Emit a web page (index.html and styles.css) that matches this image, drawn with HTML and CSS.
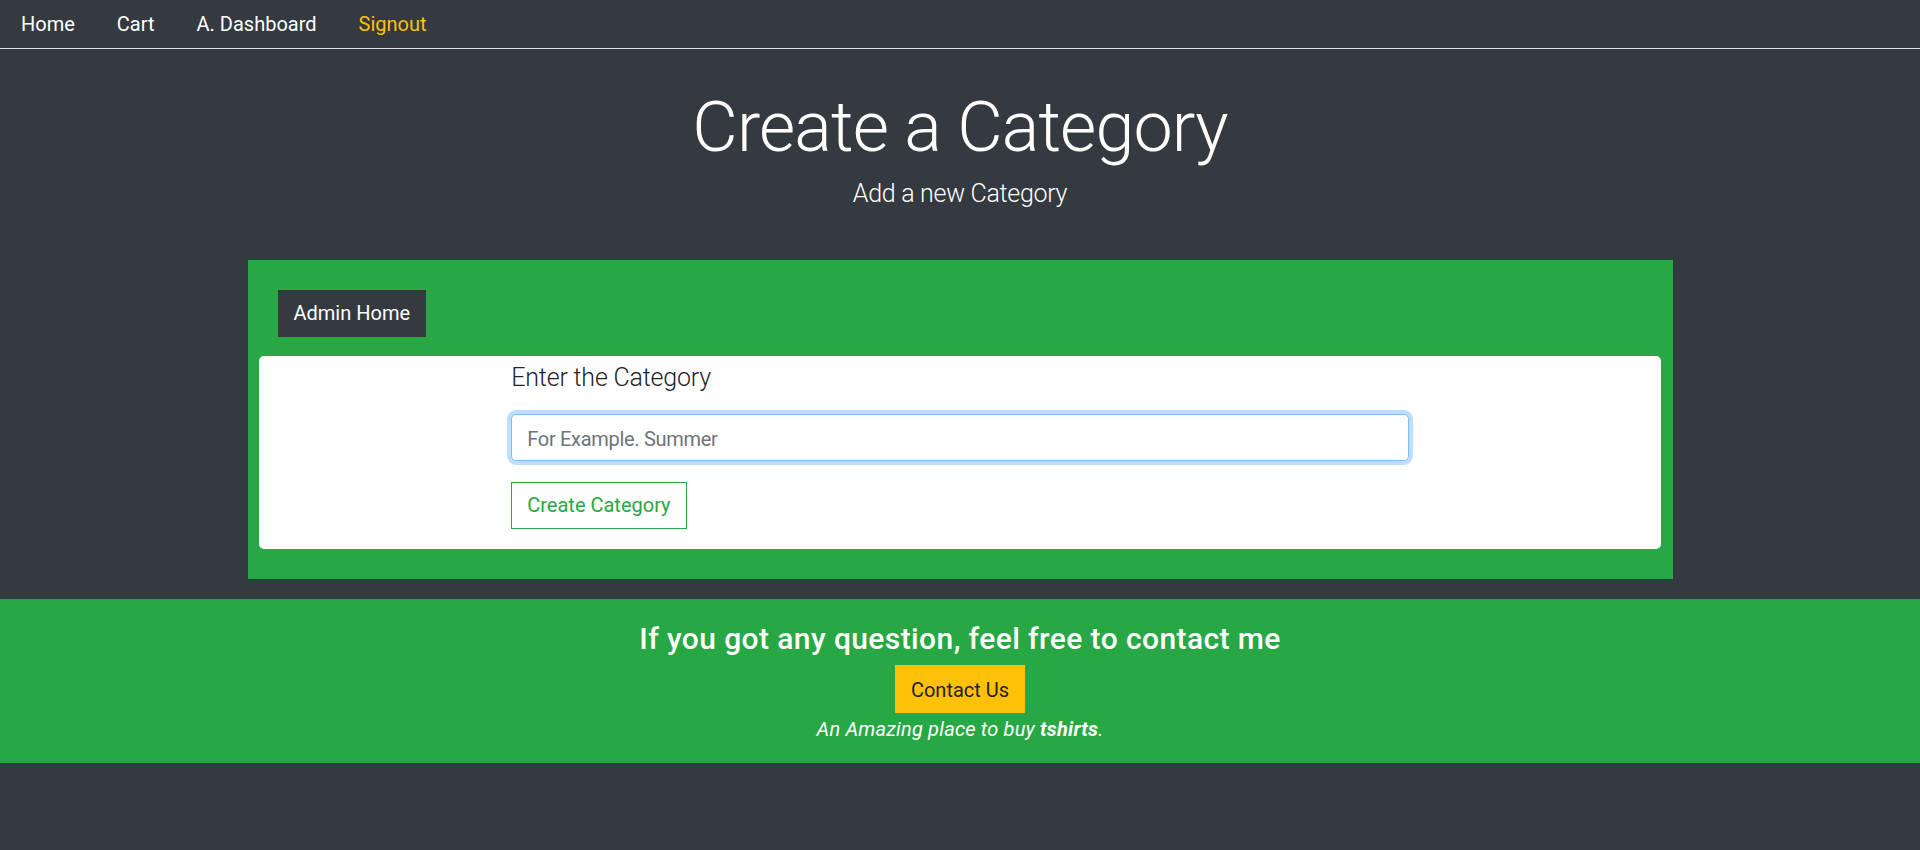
FILE: index.html
```html
<!DOCTYPE html>
<html lang="en">
<head>
<meta charset="utf-8">
<title>Create a Category</title>
<link rel="stylesheet" href="styles.css">
</head>
<body>
<ul class="nav">
  <li><a class="nav-link" href="#">Home</a></li>
  <li><a class="nav-link" href="#">Cart</a></li>
  <li><a class="nav-link" href="#">A. Dashboard</a></li>
  <li><a class="nav-link nav-warning" href="#">Signout</a></li>
</ul>

<header class="jumbotron">
  <h1 class="display-title">Create a Category</h1>
  <p class="lead-sub">Add a new Category</p>
</header>

<main class="container">
  <div class="admin-bar">
    <a class="btn btn-dark" href="#">Admin Home</a>
  </div>
  <div class="card">
    <form class="form-col">
      <p class="lead-label">Enter the Category</p>
      <div class="form-group">
        <input class="form-control" type="text" placeholder="For Example. Summer">
      </div>
      <button class="btn btn-outline-success" type="button">Create Category</button>
    </form>
  </div>
</main>

<footer class="footer">
  <h4 class="footer-title">If you got any question, feel free to contact me</h4>
  <div class="footer-action">
    <button class="btn btn-warning" type="button">Contact Us</button>
  </div>
  <p class="footer-note"><em>An Amazing place to buy <b>tshirts</b>.</em></p>
</footer>
</body>
</html>
```

FILE: styles.css
```css
* { box-sizing: border-box; }

html, body {
  margin: 0;
  padding: 0;
}

body {
  background: #343a40;
  color: #212529;
  font-family: Roboto, "Open Sans", Arial, sans-serif;
  font-size: 20px;
  line-height: 30px;
  min-height: 850px;
}

/* ---------- nav ---------- */
.nav {
  display: flex;
  list-style: none;
  margin: 0;
  padding: 0;
  border-bottom: 1px solid #dee2e6;
  background: #343a40;
}

.nav-link {
  display: block;
  padding: 8px 20px;
  border: 1px solid transparent;
  color: #fff;
  text-decoration: none;
  font-size: 20px;
  line-height: 30px;
}

.nav-warning { color: #ffc107; }

/* ---------- jumbotron ---------- */
.jumbotron {
  text-align: center;
  color: #fff;
  padding: 36px 0 47px;
}

.display-title {
  margin: 0 0 6px;
  font-size: 70px;
  line-height: 84px;
  font-weight: 300;
  letter-spacing: -0.85px;
}

.lead-sub {
  margin: 0;
  font-size: 25px;
  line-height: 37.5px;
  font-weight: 300;
  letter-spacing: -0.3px;
}

/* ---------- main container ---------- */
.container {
  width: 1425px;
  margin: 0 auto;
  padding: 30px;
  background: #28a745;
}

.admin-bar {
  display: flex;
  margin-bottom: 19px;
}

.btn {
  display: inline-block;
  font-family: inherit;
  font-size: 20px;
  line-height: 30px;
  font-weight: 400;
  padding: 7.5px 15px;
  border: 1px solid transparent;
  border-radius: 0;
  text-decoration: none;
  cursor: pointer;
  background: transparent;
}

.btn-dark {
  background: #343a40;
  border-color: #343a40;
  color: #fff;
}

.btn-outline-success {
  color: #28a745;
  border-color: #28a745;
  background: transparent;
}

.btn-warning {
  background: #ffc107;
  border-color: #ffc107;
  color: #212529;
  padding: 9px 15px 7px;
}

.card {
  margin: 0 -18.75px;
  background: #fff;
  border-radius: 5px;
  display: grid;
  grid-template-columns: 1fr 4fr 1fr;
}

.form-col {
  grid-column: 2;
  padding: 0 18.75px 20px;
  margin: 0;
}

.lead-label {
  margin: 0 0 17.5px;
  padding-top: 3px;
  font-size: 25px;
  line-height: 37.5px;
  font-weight: 300;
  letter-spacing: -0.2px;
  color: #212529;
}

.form-group { margin-bottom: 21px; }

.form-control {
  display: block;
  width: 100%;
  height: 47px;
  padding: 9px 15px 6px;
  font-family: inherit;
  font-size: 20px;
  line-height: 30px;
  color: #495057;
  background: #fff;
  border: 1px solid #80bdff;
  border-radius: 5px;
  box-shadow: 0 0 0 4px rgba(0, 123, 255, 0.25);
  outline: none;
}

.form-control::placeholder {
  color: #6c757d;
  letter-spacing: -0.3px;
  opacity: 1;
}

/* ---------- footer ---------- */
.footer {
  margin-top: 20px;
  background: #28a745;
  color: #fff;
  text-align: center;
  padding: 22px 0 19px;
}

.footer-title {
  margin: 0 0 8px;
  font-size: 30px;
  line-height: 36px;
  font-weight: 500;
  letter-spacing: 0.4px;
}

.footer-action {
  display: flex;
  justify-content: center;
}

.footer-note {
  margin: 1px 0 0;
  font-size: 20px;
  line-height: 30px;
  letter-spacing: 0.2px;
}

.footer-note b { font-weight: 700; }
```
